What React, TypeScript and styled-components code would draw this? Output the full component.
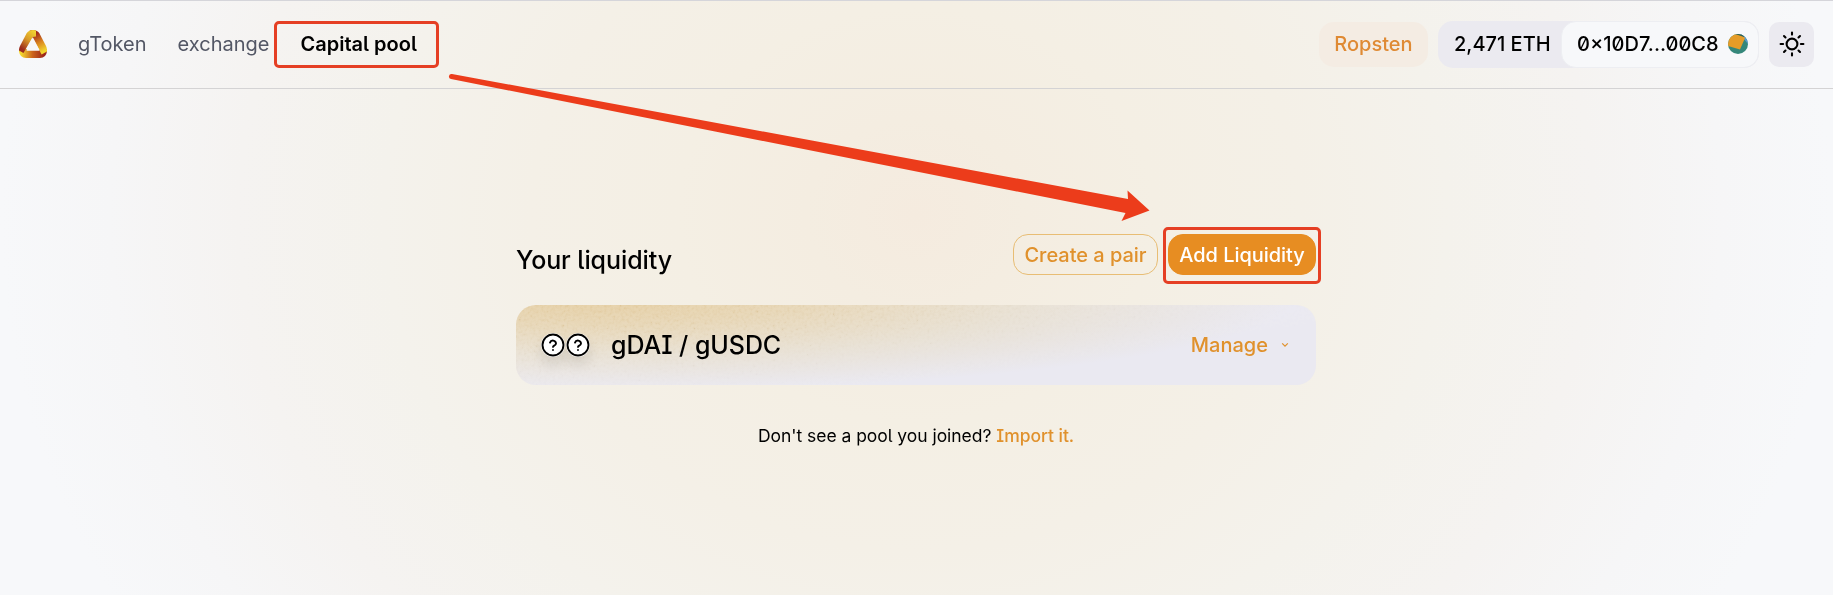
import React from 'react';
import styled, { createGlobalStyle, css } from 'styled-components';

const GlobalStyle = createGlobalStyle`
  * { box-sizing: border-box; }
  html, body { margin: 0; padding: 0; }
  body {
    font-family: Inter, sans-serif;
    font-size: 20px;
    line-height: 24px;
    color: #000;
    background: #f7f8fa;
    font-feature-settings: 'zero' 1, 'ss02' 1, 'calt' 1;
    overflow: hidden;
  }
`;

const Page = styled.div`
  position: relative;
  height: 595px;
  display: flex;
  flex-direction: column;
  background: radial-gradient(
    ellipse 916px 800px at 916px 215px,
    #f5ebdf 0%,
    #f4ede1 12%,
    #f4efe4 26%,
    #f4f0e7 42%,
    #f4f2ec 58%,
    #f5f3f1 74%,
    #f6f6f7 88%,
    #f7f8fa 100%
  );
`;

const Header = styled.header`
  display: flex;
  align-items: center;
  justify-content: space-between;
  height: 89px;
  padding: 0 19px 0 19px;
  border-top: 1px solid #d5d5da;
  border-bottom: 1px solid #d4d3d4;
`;

const Nav = styled.nav`
  display: flex;
  align-items: center;
  padding-bottom: 2px;
`;

const Logo = styled.svg`
  display: block;
  width: 28px;
  height: 28px;
  margin-right: 31px;
`;

const NavLink = styled.a<{ $active?: boolean }>`
  color: #535765;
  margin-right: 31px;
  white-space: nowrap;
  ${(p) => p.$active && css`color: #000; font-weight: 600; margin-right: 0;`}
`;

const Marker = styled.span<{ $inset: string }>`
  position: absolute;
  inset: ${(p) => p.$inset};
  border: 3px solid #e53f24;
  border-radius: 5px;
  pointer-events: none;
`;

const Marked = styled.span`
  position: relative;
  display: inline-flex;
`;

const Controls = styled.div`
  display: flex;
  align-items: center;
  padding-bottom: 1px;
  font-weight: 500;
`;

const Network = styled.div`
  height: 45px;
  width: 109px;
  display: flex;
  align-items: center;
  justify-content: center;
  margin-right: 10px;
  padding-bottom: 1px;
  border-radius: 15px;
  color: #df8a34;
  background: #f4ece3;
`;

const Wallet = styled.div`
  display: flex;
  height: 47px;
  width: 321px;
  border-radius: 15px;
  background: #ebeaf0;
`;

const Balance = styled.div`
  flex: 1;
  display: flex;
  align-items: center;
  padding: 0 0 1px 16px;
  white-space: nowrap;
`;

const Account = styled.div`
  display: flex;
  align-items: center;
  justify-content: space-between;
  width: 198px;
  padding: 0 10px 1px 15px;
  border: 1px solid #edeef2;
  border-radius: 15px;
  background: #f7f8fa;
  white-space: nowrap;
`;

const Avatar = styled.svg`
  display: block;
  width: 20px;
  height: 20px;
`;

const ThemeButton = styled.button`
  width: 45px;
  height: 45px;
  margin-left: 10px;
  padding: 0;
  border: 0;
  border-radius: 10px;
  background: #ebeaf0;
  display: grid;
  place-items: center;
`;

const Content = styled.main`
  width: 800px;
  margin: 145px 0 0 516px;
  display: flex;
  flex-direction: column;
`;

const TitleRow = styled.div`
  display: flex;
  justify-content: space-between;
  align-items: flex-start;
`;

const Title = styled.h1`
  margin: 11px 0 0;
  font-size: 25px;
  line-height: 30px;
  font-weight: 500;
  letter-spacing: -0.08px;
`;

const Actions = styled.div`
  display: flex;
  gap: 10px;
`;

const Action = styled.button<{ $filled?: boolean }>`
  height: 41px;
  width: ${(p) => (p.$filled ? 148 : 145)}px;
  padding: 0;
  border: 1px solid ${(p) => (p.$filled ? '#e78d22' : '#e8bd74')};
  border-radius: 15px;
  background: ${(p) => (p.$filled ? '#e78d22' : 'transparent')};
  color: ${(p) => (p.$filled ? '#fff' : '#e0912c')};
  font: inherit;
  font-feature-settings: inherit;
  font-weight: 500;
  letter-spacing: -0.03px;
  white-space: nowrap;
`;

const PoolCard = styled.section`
  position: relative;
  height: 80px;
  margin-top: 30px;
  padding: 0 25px;
  display: flex;
  align-items: center;
  border-radius: 20px;
  overflow: hidden;
  background: radial-gradient(ellipse 700px 94px at 80px -8px, #e3ca9b 0%, #e5d3b1 30%, #e7dfd1 62%, #eae9f1 100%) #eae9f1;
`;

const Grain = styled.svg`
  position: absolute;
  inset: 0;
  width: 100%;
  height: 100%;
  opacity: 0.3;
  mix-blend-mode: soft-light;
  mask-image: linear-gradient(172deg, #000 30%, transparent 75%);
`;

const Tokens = styled.div`
  position: relative;
  display: flex;
  gap: 1px;
  margin-right: 21px;
`;

const TokenIcon = styled.svg`
  display: block;
  width: 24px;
  height: 24px;
  border-radius: 50%;
  box-shadow: 0 8px 13px rgba(0, 0, 0, 0.09);
`;

const PairName = styled.div`
  position: relative;
  font-size: 25px;
  line-height: 30px;
  font-weight: 500;
  letter-spacing: -0.05px;
`;

const Manage = styled.a`
  position: relative;
  margin: 0 2px 0 auto;
  display: flex;
  align-items: center;
  gap: 13px;
  color: #e0912c;
  font-weight: 500;
`;

const Hint = styled.p`
  margin: 40px 0 0;
  text-align: center;
  font-size: 17.5px;
  line-height: 21px;
  letter-spacing: -0.04px;

  a { color: #e0912c; font-weight: 500; }
`;

const Arrow = styled.svg`
  position: absolute;
  left: 0;
  top: 0;
  pointer-events: none;
`;

const UnknownToken = () => (
  <TokenIcon viewBox="0 0 24 24" fill="none">
    <circle cx="12" cy="12" r="12" fill="#fff" />
    <circle cx="12" cy="12" r="10.5" stroke="#000" strokeWidth="1.9" />
    <path d="M9 9.600a3.100 3.100 0 0 1 6 .900c0 2-3 2.200-3 3.400M12 16.900v.1" stroke="#000" strokeWidth="1.9" strokeLinecap="round" />
  </TokenIcon>
);

export default function App() {
  return (
    <Page>
      <GlobalStyle />
      <Header>
        <Nav>
          <Logo viewBox="0 0 28 28" fill="none" strokeWidth="10">
            <defs>
              <clipPath id="shape">
                <path d="M14 0Q18.500 0 20.500 3.500L27 16Q29.500 21.500 26 26Q24 28 21 28H7Q4 28 2 26Q-1.500 21.500 1 16L7.500 3.500Q9.500 0 14 0Z" />
              </clipPath>
              <linearGradient id="left" x1="17" y1="2" x2="3" y2="19" gradientUnits="userSpaceOnUse">
                <stop stopColor="#f2d632" /><stop offset=".5" stopColor="#d99a28" /><stop offset="1" stopColor="#9b2a1c" />
              </linearGradient>
              <linearGradient id="right" x1="16" y1="4" x2="25" y2="21" gradientUnits="userSpaceOnUse">
                <stop stopColor="#a12c1b" /><stop offset=".5" stopColor="#d98420" /><stop offset="1" stopColor="#f3d62f" />
              </linearGradient>
              <linearGradient id="base" x1="2" y1="24" x2="25" y2="24" gradientUnits="userSpaceOnUse">
                <stop stopColor="#f5d92e" /><stop offset=".5" stopColor="#cc641d" /><stop offset="1" stopColor="#9c271a" />
              </linearGradient>
            </defs>
            <g clipPath="url(#shape)">
              <rect y="19" width="28" height="9" fill="url(#base)" />
              <path d="M14 -2L27 22" stroke="url(#right)" />
              <path d="M1 21L10.500 4.500Q12 2.500 17 2.500" stroke="url(#left)" strokeWidth="8" />
            </g>
            <path d="M14 7.500L20.500 20Q20.600 20.800 20 20.800H8Q7.400 20.800 7.500 20Z" fill="#f7f8fa" />
          </Logo>
          <NavLink>gToken</NavLink>
          <NavLink>exchange</NavLink>
          <Marked>
            <NavLink $active>Capital pool</NavLink>
            <Marker $inset="-11px -22px -12px -27px" />
          </Marked>
        </Nav>
        <Controls>
          <Network>Ropsten</Network>
          <Wallet>
            <Balance>2,471 ETH</Balance>
            <Account>
              0×10D7...00C8
              <Avatar viewBox="0 0 20 20">
                <defs><clipPath id="disc"><circle cx="10" cy="10" r="10" /></clipPath></defs>
                <g clipPath="url(#disc)">
                  <rect width="20" height="20" fill="#35877a" />
                  <path d="M12 0 H20 V10 L15 4Z" fill="#5797cc" />
                  <path d="M-2 11.500 L0 -1 L13 1 L17 4 L12 15.500Z" fill="#e59c28" />
                  <path d="M7 0 L17 0 L16 3Z" fill="#315f50" />
                </g>
              </Avatar>
            </Account>
          </Wallet>
          <ThemeButton aria-label="Theme">
            <svg width="26" height="26" viewBox="0 0 26 26" fill="none" stroke="#000" strokeWidth="2.1" strokeLinecap="round">
              <circle cx="13" cy="13" r="5.4" />
              <path d="M13 1.6v2M13 22.4v2M1.6 13h2.5M21.900 13h2.5M5 5l1.5 1.5M19.5 19.5l1.5 1.5M5 21l1.5-1.5M19.5 6.5l1.5-1.5" />
            </svg>
          </ThemeButton>
        </Controls>
      </Header>
      <Content>
        <TitleRow>
          <Title>Your liquidity</Title>
          <Actions>
            <Action>Create a pair</Action>
            <Marked>
              <Action $filled>Add Liquidity</Action>
              <Marker $inset="-7px -5px -9px -5px" />
            </Marked>
          </Actions>
        </TitleRow>
        <PoolCard>
          <Grain>
            <filter id="grain">
              <feTurbulence type="fractalNoise" baseFrequency="0.35" numOctaves="2" />
              <feColorMatrix type="matrix" values="2 0 0 0 -0.3  2 0 0 0 -0.3  2 0 0 0 -0.3  0 0 0 0 1" />
            </filter>
            <rect width="100%" height="100%" filter="url(#grain)" />
          </Grain>
          <Tokens>
            <UnknownToken />
            <UnknownToken />
          </Tokens>
          <PairName>gDAI / gUSDC</PairName>
          <Manage>
            Manage
            <svg width="8" height="6" viewBox="0 0 8 6" fill="none" stroke="#e0912c" strokeWidth="1.2">
              <path d="M1.200 1.300 L4 4.200 L6.800 1.300" />
            </svg>
          </Manage>
        </PoolCard>
        <Hint>Don't see a pool you joined? <a>Import it.</a></Hint>
      </Content>
      <Arrow width="1833" height="595" viewBox="0 0 1833 595">
        <path d="M452 74 L1128 199 L1127.500 190.500 L1149.500 210.500 L1121.500 221 L1125.500 213 L451 79 A2.500 2.500 0 0 1 452 74Z" fill="#ec3c1b" />
      </Arrow>
    </Page>
  );
}
